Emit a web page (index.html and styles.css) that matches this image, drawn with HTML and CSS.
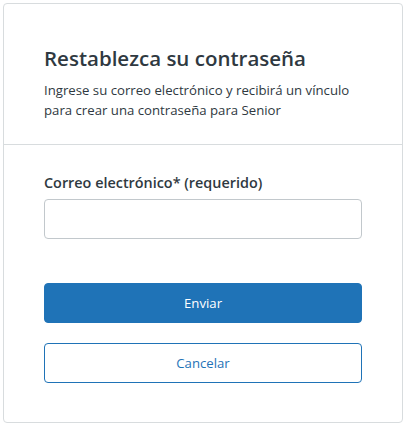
FILE: index.html
```html
<!DOCTYPE html>
<html lang="es">
<head>
  <meta charset="UTF-8">
  <meta name="viewport" content="width=device-width, initial-scale=1.0">
  <title>Restablezca su contraseña</title>
  <link rel="stylesheet" href="styles.css">
</head>
<body>
  <div class="card">
    <div class="card-header">
      <h1>Restablezca su contraseña</h1>
      <p>Ingrese su correo electrónico y recibirá un vínculo para crear una contraseña para Senior</p>
    </div>
    <form class="card-body">
      <label for="email">Correo electrónico* (requerido)</label>
      <input type="email" id="email" class="field">
      <button type="button" class="btn btn-primary">Enviar</button>
      <button type="button" class="btn btn-outline">Cancelar</button>
    </form>
  </div>
</body>
</html>
```

FILE: styles.css
```css
* {
  margin: 0;
  padding: 0;
  box-sizing: border-box;
}

body {
  padding: 3px;
  font-family: 'Open Sans', sans-serif;
  color: #2f3941;
  background: #fff;
}

.card {
  width: 400px;
  height: 420px;
  border: 1px solid #d8dcde;
  border-radius: 4px;
}

.card-header {
  padding: 40px 40px 24px;
  border-bottom: 1px solid #d8dcde;
}

.card-header h1 {
  font-size: 20.5px;
  line-height: 28px;
  font-weight: 600;
  margin-bottom: 8px;
}

.card-header p {
  font-size: 13.2px;
  line-height: 20px;
}

.card-body {
  display: flex;
  flex-direction: column;
  padding: 28px 40px 40px;
}

.card-body label {
  font-size: 14.4px;
  line-height: 20px;
  font-weight: 600;
  margin-bottom: 6px;
}

.field {
  height: 40px;
  border: 1px solid #c2c8cc;
  border-radius: 4px;
  margin-bottom: 44px;
  font: inherit;
}

.btn {
  height: 40px;
  border-radius: 4px;
  font-family: inherit;
  font-size: 13.2px;
  border: 1px solid #1f73b7;
}

.btn-primary {
  background: #1f73b7;
  color: #fff;
  margin-bottom: 20px;
}

.btn-outline {
  background: #fff;
  color: #1f73b7;
}
```
